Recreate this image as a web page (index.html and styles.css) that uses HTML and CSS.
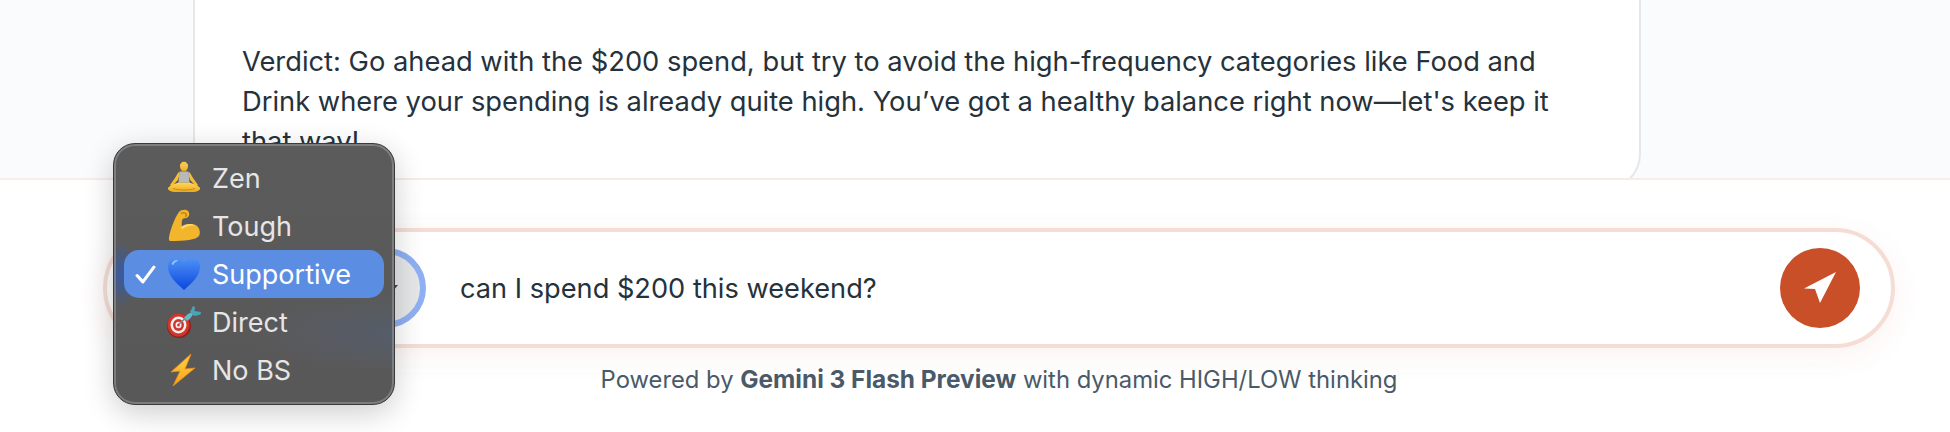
FILE: index.html
```html
<!DOCTYPE html>
<html lang="en">
<head>
<meta charset="utf-8">
<title>Chat</title>
<link rel="stylesheet" href="styles.css">
</head>
<body>
<div class="app">
  <section class="chat">
    <article class="card">
      <p class="message">Verdict: Go ahead with the $200 spend, but try to avoid the high-frequency categories like Food and Drink where your spending is already quite high. You’ve got a healthy balance right now—let's keep it that way!</p>
    </article>
  </section>
  <footer class="footer">
    <form class="composer">
      <div class="select">
        <svg class="caret" viewBox="0 0 12 8"><path d="M1 1h10L6 7z"/></svg>
      </div>
      <div class="field">can I spend $200 this weekend?</div>
      <button class="send" type="button" aria-label="Send">
        <svg viewBox="0 0 80 80"><path d="M56 24 24 40.500 35 41 40 55z"/></svg>
      </button>
    </form>
    <p class="caption">Powered by <strong>Gemini 3 Flash Preview</strong> with dynamic HIGH/LOW thinking</p>
  </footer>
  <div class="menu">
    <div class="item">
      <span class="check"></span>
      <svg class="emoji" viewBox="0 0 34 34"><defs><linearGradient id="skin" x1="0" y1="0" x2="0" y2="1"><stop offset="0" stop-color="#ffd85a"/><stop offset="1" stop-color="#eca91f"/></linearGradient></defs><ellipse cx="17" cy="5.500" rx="4" ry="4.800" fill="url(#skin)"/><path d="M13 4.500a4.200 4.200 0 0 1 8 0z" fill="#efc554"/><path d="M11.500 11 8 17l-5 7 1.800 1.500 6-6.500 2-6z" fill="#f5bf35"/><path d="M22.500 11 26 17l5 7-1.800 1.500-6-6.500-2-6z" fill="#f5bf35"/><path d="M12.500 10.500h9l1 11h-11z" fill="#b7b9bb"/><path d="M11.500 21.500h11c3 1 9 3 10.500 5.500.4 2-2 3.500-6 4H7c-4-.5-6.400-2-6-4 1.500-2.500 7.500-4.500 10.500-5.500z" fill="url(#skin)"/><path d="M6 27.500c5 2 17 2 22 0" fill="none" stroke="#c98a12" stroke-width="1"/></svg>
      <span>Zen</span>
    </div>
    <div class="item">
      <span class="check"></span>
      <svg class="emoji" viewBox="0 0 34 34"><path d="M12 3c2-2.500 7-3 9-1 2 2 1.500 5-.5 6.500-2 1.200-3.500.5-5 1.500-.8 2-1 5-.5 8 4-3.500 11-4 15-1 3 2.500 3.500 7.500 2 10-3 4-14 5-29 5C2.500 32 1.500 31 2 28.500 3 22 7 10 12 3z" fill="#f2b52c"/><path d="M14 18c4-3.500 10-4 14.500-1.500-5-.5-10 1-13.500 4z" fill="#ffd766"/><path d="M14 4.500c1.500-1 4-1 5 .3.800 1.200.2 2.500-1 2.700" fill="none" stroke="#b5780f" stroke-width="1.200"/></svg>
      <span>Tough</span>
    </div>
    <div class="item selected">
      <svg class="check" viewBox="0 0 20 18"><path d="M2 10l5.500 6L18 2" fill="none" stroke="#fff" stroke-width="3" stroke-linecap="round" stroke-linejoin="round"/></svg>
      <svg class="emoji" viewBox="0 0 34 34"><defs><linearGradient id="blue" x1="0" y1="0" x2="0" y2="1"><stop offset="0" stop-color="#4f93f5"/><stop offset="1" stop-color="#0b46e0"/></linearGradient></defs><path d="M17 33C9 26 1 19 1 9.500 1 4 5 .5 9.500.5c3.500 0 6 2 7.500 5 1.500-3 4-5 7.500-5C29 .5 33 4 33 9.500 33 19 25 26 17 33z" fill="url(#blue)"/><path d="M5 6c1-2 3-3 5-3 1 0 1.500 1-.5 1.500C8 5 7 6 6.500 7.500 6 8.500 4.500 7.500 5 6z" fill="#9cc4fb"/></svg>
      <span>Supportive</span>
    </div>
    <div class="item">
      <span class="check"></span>
      <svg class="emoji" viewBox="0 0 34 32"><circle cx="12" cy="20" r="12" fill="#8f1f18"/><ellipse cx="11.500" cy="19" rx="11" ry="11.500" fill="#d2352c"/><ellipse cx="11.500" cy="19" rx="8" ry="8.500" fill="#f4efec"/><ellipse cx="11.500" cy="19" rx="5.500" ry="6" fill="#d2352c"/><ellipse cx="11.500" cy="19" rx="3" ry="3.300" fill="#f4efec"/><ellipse cx="11.500" cy="19" rx="1.300" ry="1.500" fill="#d2352c"/><path d="M12 18 21 10" stroke="#7c8a8c" stroke-width="1.600"/><path d="M17 12c2-3 5-5 7.500-5.500L26 8.500c-1.500 2.500-3.500 5-6 6.500z" fill="#63b9c8"/><path d="M23 6l3-6 2 1-.5 4L34 6l-.5 2.500-6 1.500z" fill="#4aa3b6"/></svg>
      <span>Direct</span>
    </div>
    <div class="item">
      <span class="check"></span>
      <svg class="emoji" viewBox="0 0 34 34"><defs><linearGradient id="bolt" x1="0" y1="0" x2="0" y2="1"><stop offset="0" stop-color="#ffd23f"/><stop offset="1" stop-color="#f9a21e"/></linearGradient></defs><path d="M24 1 4 19l9-1L6 33l22-18-10 1z" fill="url(#bolt)" stroke="#ee8a1e" stroke-width=".8" stroke-linejoin="round"/></svg>
      <span>No BS</span>
    </div>
  </div>
</div>
</body>
</html>
```
FILE: styles.css
```css
* { box-sizing: border-box; }
html, body { margin: 0; height: 432px; overflow: hidden; background: #fff; }
body { font-family: Inter, "Noto Sans", sans-serif; color: #25323c; }
.app { position: relative; width: 1950px; height: 432px; }

.chat {
  height: 180px;
  padding-left: 193px;
  background: #fafbfc;
  border-bottom: 2px solid #f8ebe8;
  overflow: hidden;
}
.card {
  width: 1448px;
  height: 190px;
  padding: 42px 48px 0 47px;
  background: #fff;
  border: 2px solid #e6e7e9;
  border-top: 0;
  border-radius: 0 0 36px 36px;
}
.message { margin: 0; font-size: 27.300px; line-height: 40px; }

.footer { padding: 48px 55px 0 103px; }
.composer {
  display: flex;
  align-items: center;
  height: 120px;
  padding: 0 31px 0 12px;
  background: #fff;
  border: 4px solid #f5ddd6;
  border-radius: 60px;
  box-shadow: 0 8px 30px rgba(200, 79, 39, .07);
}
.select {
  display: flex;
  align-items: center;
  justify-content: flex-end;
  flex: none;
  width: 307px;
  height: 80px;
  padding-right: 21px;
  background: #e6e7e9;
  border: 6px solid #8fb0f2;
  border-radius: 40px;
}
.caret { width: 12px; height: 8px; fill: #3d4650; }
.field { flex: 1; padding-left: 34px; font-size: 27.200px; }
.send {
  flex: none;
  width: 80px;
  height: 80px;
  padding: 0;
  border: 0;
  border-radius: 50%;
  background: #c84f27;
}
.send svg { display: block; width: 80px; height: 80px; fill: #fff; }
.caption {
  margin: 19px 0 0;
  text-align: center;
  font-size: 23.800px;
  line-height: 24px;
  color: #4a5a68;
}
.caption strong { font-weight: 700; font-size: 24.400px; }

.menu {
  position: absolute;
  left: 113px;
  top: 143px;
  width: 282px;
  height: 262px;
  padding: 10px 10px 0;
  border-radius: 22px;
  background:
    radial-gradient(14px 34px at 8px 130px, rgba(40, 90, 200, .7), transparent),
    radial-gradient(150px 40px at 290px 190px, rgba(70, 110, 170, .22), transparent),
    linear-gradient(#5b5b5b, #595858);
  border: 1px solid #3a3a3c;
  box-shadow: inset 0 0 0 2px rgba(255, 255, 255, .22), 0 8px 30px rgba(0, 0, 0, .2);
  color: #e6e6e6;
  font-size: 27px;
}
.item {
  display: flex;
  align-items: center;
  height: 48px;
  padding-left: 11px;
  border-radius: 15px;
}
.selected { background: #5b8ee2; color: #fff; }
.check { flex: none; width: 21px; height: 19px; margin-right: 11px; }
.emoji { flex: none; width: 34px; height: 34px; margin-right: 11px; }
```
